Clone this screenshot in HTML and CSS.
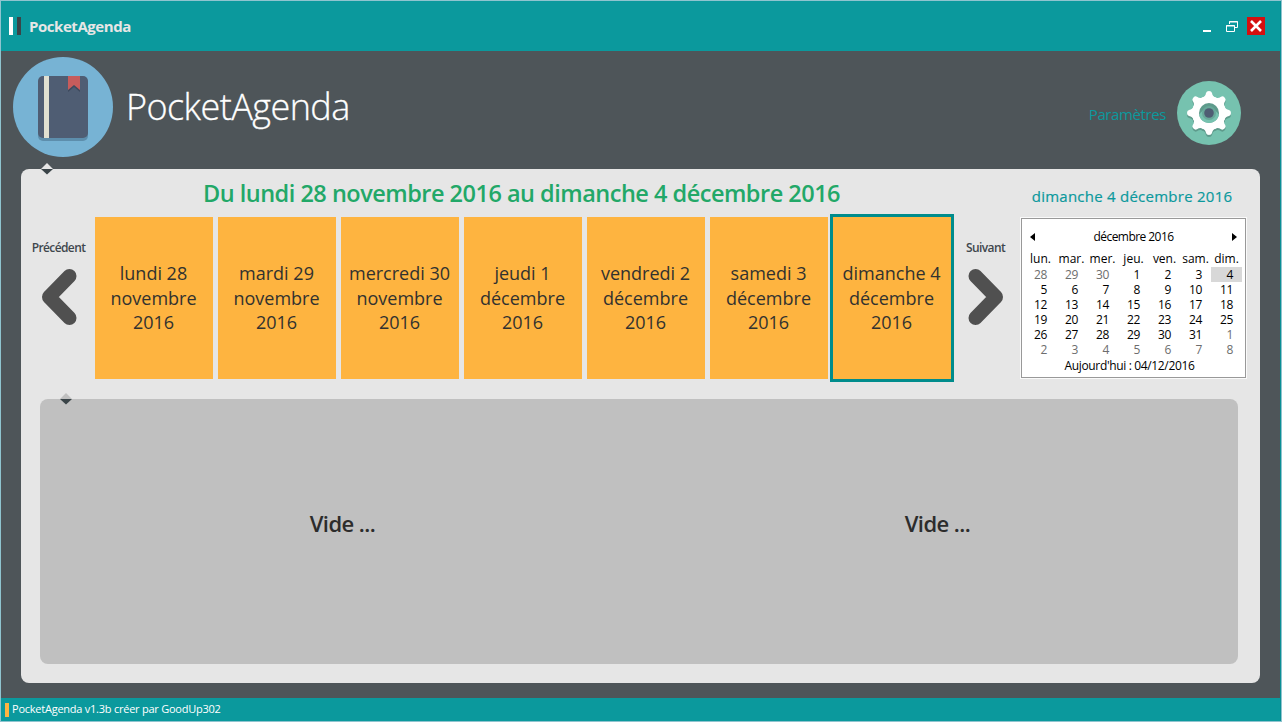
FILE: index.html
```html
<!DOCTYPE html>
<html lang="fr">
<head>
<meta charset="utf-8">
<title>PocketAgenda</title>
<link rel="stylesheet" href="styles.css">
</head>
<body>
<div class="window">
  <header class="titlebar">
    <span class="bar bar-light"></span><span class="bar bar-dark"></span>
    <span class="titlebar-name">PocketAgenda</span>
    <svg class="controls" width="66" height="20" viewBox="0 0 66 20">
      <rect x="3" y="14" width="8" height="2" fill="#fff"/>
      <path d="M29.500 8V5.500H37.500V11.500H35M29 6H38" fill="none" stroke="#fff"/>
      <path d="M26.500 9.500H34.500V15.500H26.500ZM26 10H35" fill="none" stroke="#fff"/>
      <rect x="47" y="1" width="18" height="18" fill="#d50f0f"/>
      <path d="M51 5L61 15M61 5L51 15" stroke="#fff" stroke-width="2.600"/>
    </svg>
  </header>
  <section class="banner">
    <svg class="book" width="100" height="100" viewBox="0 0 100 100">
      <circle cx="50" cy="50" r="50" fill="#77b3d4"/>
      <rect x="25" y="21" width="50" height="63" rx="5" fill="#5d8eac"/>
      <rect x="25" y="19" width="50" height="62" rx="5" fill="#4f5d73"/>
      <rect x="31" y="19" width="5" height="62" fill="#e0e0d1"/>
      <path d="M55 21H67V35L61 30L55 35Z" fill="#3e4a5e"/>
      <path d="M55 19H67V33L61 28L55 33Z" fill="#c75c5c"/>
    </svg>
    <h1 class="brand"><span>PocketAgenda</span></h1>
    <span class="settings">Paramètres</span>
    <svg class="gear" width="64" height="64" viewBox="0 0 64 64">
      <defs><g id="cog">
        <circle cx="32" cy="32" r="17"/>
        <g id="tooth"><path d="M25 17Q28.500 15.500 29 12Q29.500 10 32 10Q34.500 10 35 12Q35.500 15.500 39 17V47Q35.500 48.500 35 52Q34.500 54 32 54Q29.500 54 29 52Q28.500 48.500 25 47Z"/></g>
        <use href="#tooth" transform="rotate(45 32 32)"/>
        <use href="#tooth" transform="rotate(90 32 32)"/>
        <use href="#tooth" transform="rotate(135 32 32)"/>
      </g></defs>
      <circle cx="32" cy="32" r="32" fill="#76c2af"/>
      <use href="#cog" y="2" fill="#5e9b8c"/>
      <use href="#cog" fill="#fff"/>
      <circle cx="32" cy="32" r="10" fill="#5e9b8c"/>
      <path d="M22.300 34.500A10 10 0 0 0 41.700 34.500A10 9 0 0 0 22.300 34.500Z" fill="#76c2af"/>
      <circle cx="32" cy="32" r="7" fill="#68a899"/>
      <circle cx="32" cy="32" r="4.800" fill="#4f5d73"/>
    </svg>
  </section>
  <main class="panel">
    <svg class="grip" width="12" height="12" viewBox="0 0 12 12"><path d="M6 0L12 6H0Z" fill="#e6e6e6"/><path d="M0 6H12L6 11.500Z" fill="#3a4448"/></svg>
    <div class="top">
      <div class="week">
        <h2 class="range"><span>Du lundi 28 novembre 2016 au dimanche 4 décembre 2016</span></h2>
        <div class="strip">
          <div class="nav nav-prev"><span>Précédent</span>
            <svg width="36" height="58" viewBox="0 0 36 58"><path d="M28.500 8L8 29L28.500 50" fill="none" stroke="#505050" stroke-width="14" stroke-linecap="round" stroke-linejoin="round"/></svg></div>
          <div class="days">
            <div class="day">lundi 28<br>novembre<br>2016</div>
            <div class="day">mardi 29<br>novembre<br>2016</div>
            <div class="day">mercredi 30<br>novembre<br>2016</div>
            <div class="day">jeudi 1<br>décembre<br>2016</div>
            <div class="day">vendredi 2<br>décembre<br>2016</div>
            <div class="day">samedi 3<br>décembre<br>2016</div>
            <div class="day selected">dimanche 4<br>décembre<br>2016</div>
          </div>
          <div class="nav nav-next"><span>Suivant</span>
            <svg width="36" height="58" viewBox="0 0 36 58"><path d="M7.500 8L28 29L7.500 50" fill="none" stroke="#505050" stroke-width="14" stroke-linecap="round" stroke-linejoin="round"/></svg></div>
        </div>
      </div>
      <aside class="side">
        <div class="today-title"><span>dimanche 4 décembre 2016</span></div>
        <div class="calendar">
          <div class="cal-head">
            <svg width="5" height="8" viewBox="0 0 5 8"><path d="M5 0V8L0 4Z"/></svg>
            <span>décembre 2016</span>
            <svg width="5" height="8" viewBox="0 0 5 8"><path d="M0 0V8L5 4Z"/></svg>
          </div>
          <div class="names"><span>lun.</span><span>mar.</span><span>mer.</span><span>jeu.</span><span>ven.</span><span>sam.</span><span>dim.</span></div>
          <div class="grid">
            <i>28</i><i>29</i><i>30</i><b>1</b><b>2</b><b>3</b><b class="current">4</b>
            <b>5</b><b>6</b><b>7</b><b>8</b><b>9</b><b>10</b><b>11</b>
            <b>12</b><b>13</b><b>14</b><b>15</b><b>16</b><b>17</b><b>18</b>
            <b>19</b><b>20</b><b>21</b><b>22</b><b>23</b><b>24</b><b>25</b>
            <b>26</b><b>27</b><b>28</b><b>29</b><b>30</b><b>31</b><i>1</i>
            <i>2</i><i>3</i><i>4</i><i>5</i><i>6</i><i>7</i><i>8</i>
          </div>
          <div class="cal-foot">Aujourd'hui : 04/12/2016</div>
        </div>
      </aside>
    </div>
    <section class="events">
      <svg class="grip" width="12" height="12" viewBox="0 0 12 12"><path d="M6 0L12 6H0Z" fill="#c0c0c0"/><path d="M0 6H12L6 11.500Z" fill="#3a4448"/></svg>
      <div class="empty">Vide ...</div>
      <div class="empty">Vide ...</div>
    </section>
  </main>
  <footer class="status"><span class="status-mark"></span><span class="status-text">PocketAgenda v1.3b créer par GoodUp302</span></footer>
</div>
</body>
</html>
```
FILE: styles.css
```css
* { box-sizing: border-box; }
body { margin: 0; width: 1282px; height: 722px; overflow: hidden; background: #8fc4cf; font-family: "Open Sans", "Noto Sans", sans-serif; }
svg { display: block; flex: none; }
span { white-space: nowrap; }
.window { margin: 1px; height: 720px; display: flex; flex-direction: column; background: #4e5559; border-right: 1px solid #0b8f94; }
.titlebar { height: 50px; flex: none; display: flex; align-items: center; background: #0b999d; padding: 0 14px 0 8px; }
.bar { width: 4px; height: 18px; background: #fff; }
.bar-dark { background: #3a4448; margin-left: 4px; }
.titlebar-name { margin-left: 8px; font-size: 15px; font-weight: 700; letter-spacing: -0.45px; color: #e6e6e6; }
.controls { margin-left: auto; }
.banner { height: 118px; flex: none; display: flex; align-items: flex-start; padding: 6px 39px 0 12px; }
.brand { margin: 23px 0 0 13px; font-size: 36px; line-height: 54px; font-weight: 300; letter-spacing: -0.55px; color: #fff; -webkit-text-stroke: 0.3px #fff; }
.settings { margin: 46px 11px 0 auto; font-size: 15px; line-height: 22px; letter-spacing: -0.4px; color: #0b999d; }
.gear { margin-top: 24px; }
.panel { position: relative; height: 514px; margin: 0 20px; flex: none; width: 1239px; background: #e6e6e6; border-radius: 8px; }
.grip { position: absolute; left: 20px; top: -6px; }
.top { height: 230px; display: flex; padding-left: 9px; }
.week { width: 980px; flex: none; }
.range { margin: 0; padding: 8px 0 0 3px; height: 48px; text-align: center; font-size: 23.500px; line-height: 33px; font-weight: 600; letter-spacing: -0.5px; color: #22a868; }
.strip { display: flex; }
.nav { width: 59px; flex: none; height: 162px; padding-top: 22px; display: flex; flex-direction: column; align-items: center; gap: 11px; font-size: 12px; line-height: 18px; font-weight: 600; letter-spacing: -0.6px; color: #3f474d; }
.nav-prev { margin-left: -1px; }
.days { display: flex; flex: none; gap: 5px; margin: 0 5px 0 7px; }
.day { width: 118px; height: 162px; padding: 44px 1px 0 0; background: #feb440; text-align: center; font-size: 18px; line-height: 24.700px; color: #32322f; white-space: nowrap; }
.selected { box-shadow: 0 0 0 3px #008c8c; }
.side { width: 225px; margin-left: 11px; }
.today-title { height: 49px; padding: 16px 3px 0 0; text-align: center; font-size: 15px; line-height: 23px; letter-spacing: 0.25px; color: #0b999d; -webkit-text-stroke: 0.2px #0b999d; }
.calendar { height: 160px; border: 1px solid #999; outline: 1px solid #fafafa; background: #fff; font-size: 12px; line-height: 15px; color: #000; }
.cal-head { display: flex; justify-content: space-between; align-items: center; padding: 10px 8px 7px; letter-spacing: -0.55px; }
.names { display: grid; grid-template-columns: repeat(7, 31px); padding: 0 3px; text-align: center; }
.grid { display: grid; grid-template-columns: repeat(7, 31px); grid-auto-rows: 15px; margin: 1px 3px 0; text-align: right; }
.grid b, .grid i { font-weight: 400; font-style: normal; padding-right: 9px; line-height: 15px; letter-spacing: -0.3px; }
.grid i { color: #6d6d6d; }
.grid .current { background: #d8d8d8; }
.cal-foot { padding: 1px 8px 0 0; text-align: center; letter-spacing: -0.35px; }
.events { position: relative; height: 265px; margin-left: 19px; width: 1198px; border-radius: 8px; background: #c0c0c0; display: grid; grid-template-columns: 595px 595px; padding: 108px 0 0 5px; text-align: center; font-size: 22px; line-height: 32px; font-weight: 600; letter-spacing: -0.55px; color: #2c2c2c; }
.status { margin-top: auto; height: 23px; flex: none; display: flex; align-items: center; padding-left: 4px; background: #0b999d; color: #fff; font-size: 11px; line-height: 15px; letter-spacing: -0.24px; }
.status-mark { width: 4px; height: 14px; margin-right: 3px; background: #feb440; }
.status-text { padding-bottom: 2px; }
```
